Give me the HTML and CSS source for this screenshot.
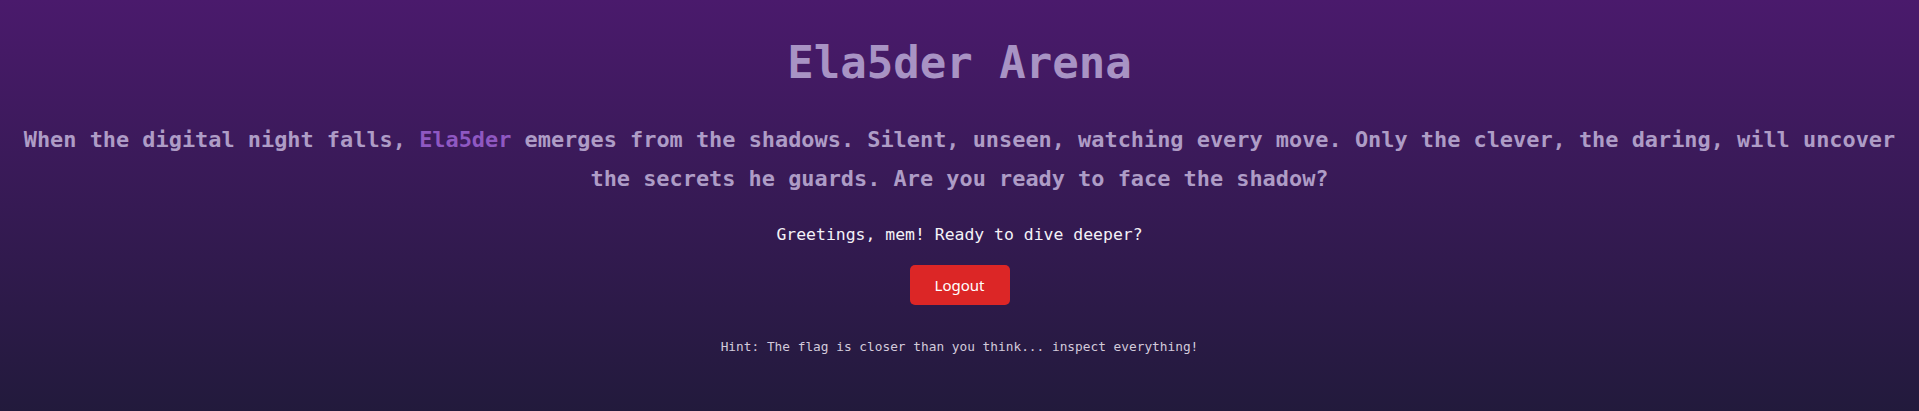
FILE: index.html
```html
<!DOCTYPE html>
<html lang="en">
<head>
<meta charset="utf-8">
<title>Ela5der Arena</title>
<link rel="stylesheet" href="styles.css">
</head>
<body>
<main class="page">
  <h1 class="title">Ela5der Arena</h1>
  <p class="intro">When the digital night falls, <span class="name">Ela5der</span> emerges from the shadows. Silent, unseen, watching every move. Only the clever, the daring, will uncover the secrets he guards. Are you ready to face the shadow?</p>
  <div class="user">
    <p class="greeting">Greetings, mem! Ready to dive deeper?</p>
    <button class="logout" type="button">Logout</button>
  </div>
  <p class="hint">Hint: The flag is closer than you think... inspect everything!</p>
</main>
</body>
</html>
```

FILE: styles.css
```css
html, body {
  margin: 0;
  padding: 0;
  height: 100%;
}

body {
  background: linear-gradient(180deg, #4a1a6c 0%, #221a3c 100%);
  font-family: "DejaVu Sans Mono", "Liberation Mono", monospace;
  color: #f2f0f5;
  overflow: hidden;
}

.page {
  padding: 33px 10px 0;
  display: flex;
  flex-direction: column;
}

.title {
  margin: 0;
  font-size: 44px;
  line-height: 60px;
  font-weight: bold;
  color: #a893c4;
  text-align: center;
}

.intro {
  margin: 27px 0 0;
  font-size: 21.9px;
  line-height: 39px;
  font-weight: bold;
  color: #ae9cc6;
  text-align: center;
}

.name {
  color: #8f58c2;
}

.user {
  margin-top: 25px;
  display: flex;
  flex-direction: column;
  align-items: center;
  gap: 18px;
}

.greeting {
  margin: 0;
  font-size: 16.45px;
  line-height: 24px;
  color: #f4f2f7;
}

.logout {
  width: 100px;
  height: 40px;
  border: none;
  border-radius: 5px;
  background: #dc2626;
  color: #ffffff;
  font-family: "Noto Sans", "Open Sans", sans-serif;
  font-size: 15px;
  cursor: pointer;
}

.hint {
  margin: 33px 0 0;
  font-size: 12.8px;
  line-height: 18px;
  color: #d3cadb;
  text-align: center;
}
```
